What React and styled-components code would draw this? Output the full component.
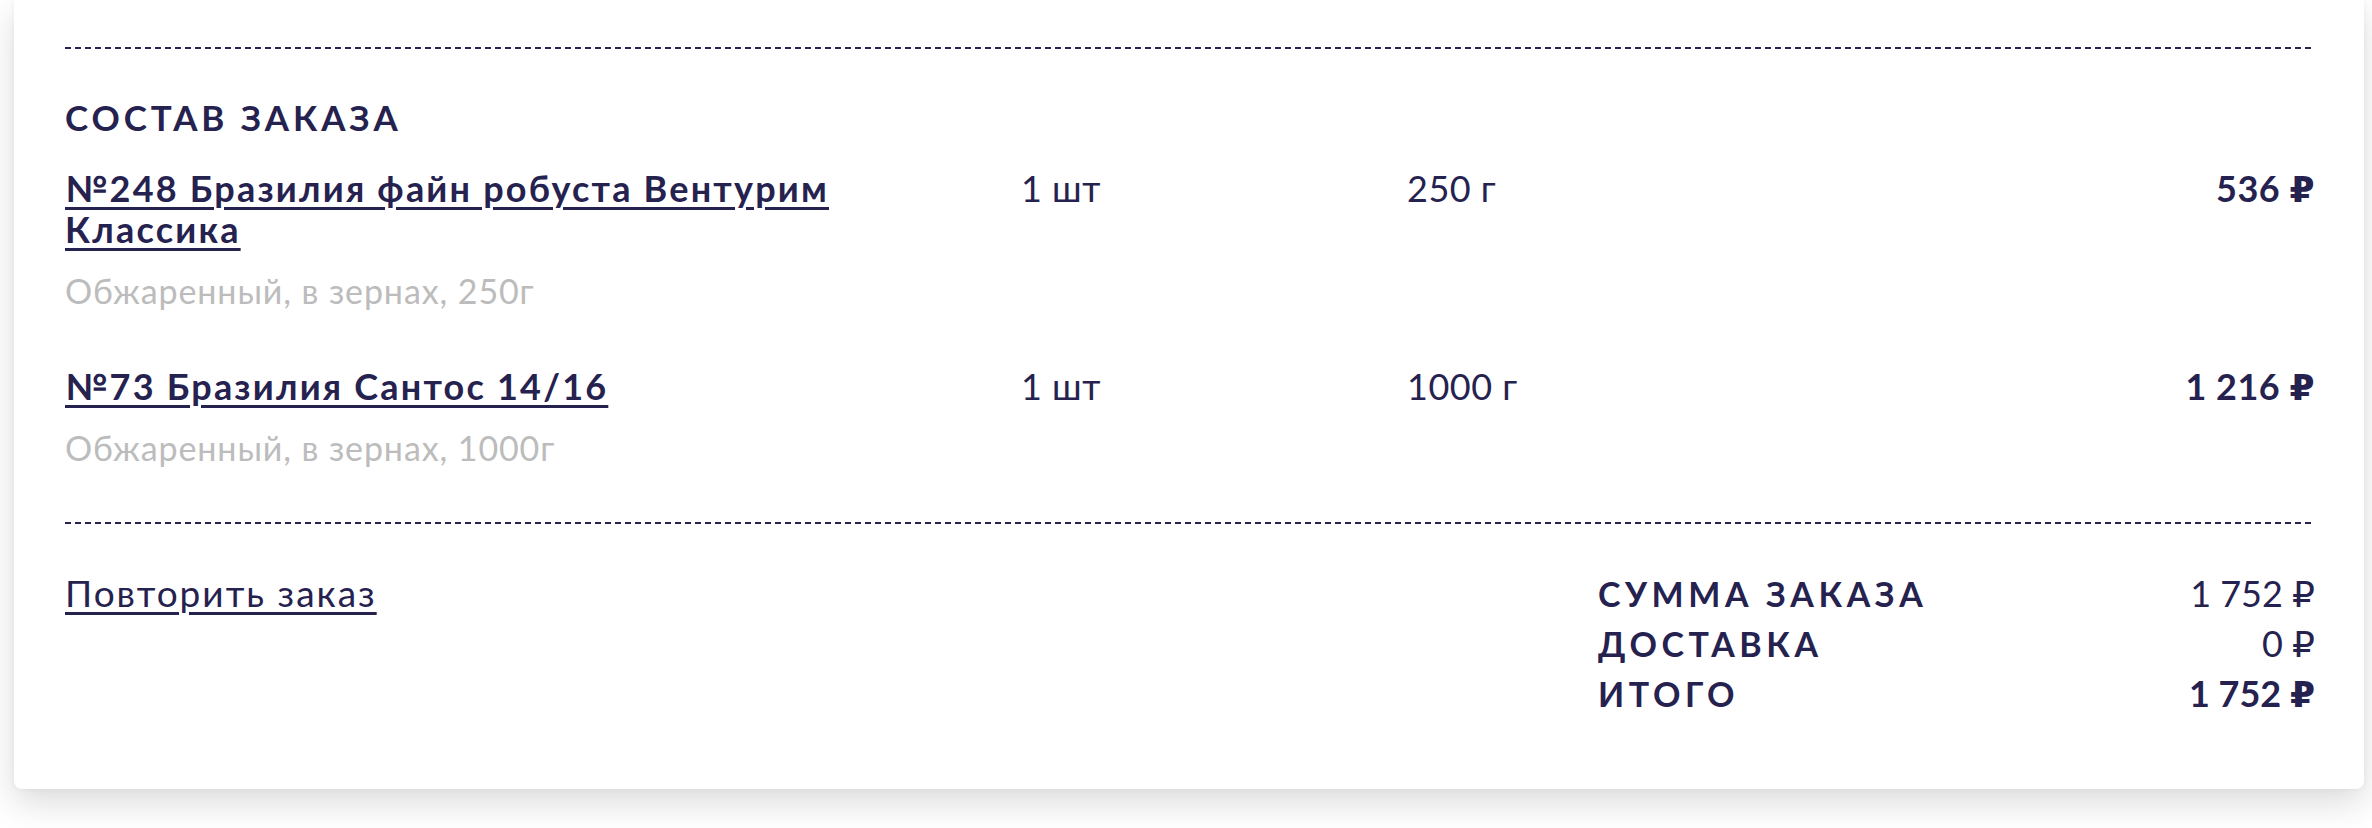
import React from "react";
import styled, { createGlobalStyle } from "styled-components";

const ink = "#26224f";

const Global = createGlobalStyle`
  html, body { margin: 0; padding: 0; background: #ffffff; }
  body { font-family: Lato, "Open Sans", "DejaVu Sans", sans-serif; color: ${ink}; }
`;

const Page = styled.div`
  padding: 0 8px 48px 14px;
`;

const Card = styled.section`
  background: #fff;
  border-radius: 0 0 8px 8px;
  box-shadow: 0 14px 34px rgba(0, 0, 0, 0.14), 0 0 6px rgba(0, 0, 0, 0.05);
  padding: 47px 49px 71px 51px;
`;

const Dashed = styled.div`
  height: 2px;
  background-image: repeating-linear-gradient(
    90deg,
    ${ink} 0 6px,
    transparent 6px 10px
  );
`;

const Heading = styled.h2`
  margin: 47px 0 0;
  font-size: 35px;
  line-height: 42px;
  font-weight: 700;
  letter-spacing: 3.9px;
  text-transform: uppercase;
`;

const Items = styled.div`
  display: flex;
  flex-direction: column;
  gap: 55px;
  margin-top: 30px;
  margin-bottom: 54px;
`;

const Item = styled.div`
  display: grid;
  grid-template-columns: 956px 386px 1fr auto;
  align-items: start;
`;

const NameCell = styled.div`
  display: flex;
  flex-direction: column;
  gap: 21px;
`;

const Title = styled.a`
  display: block;
  max-width: 880px;
  font-size: 36px;
  line-height: 41px;
  font-weight: 700;
  letter-spacing: 2.2px;
  color: ${ink};
  text-decoration: underline;
  text-decoration-thickness: 3px;
  text-underline-offset: 5px;
  cursor: pointer;
`;

const Sub = styled.div`
  font-size: 34px;
  line-height: 40px;
  letter-spacing: 0.9px;
  color: #bcbcbc;
`;

const Cell = styled.div`
  font-size: 36px;
  line-height: 41px;
  font-weight: ${(p) => (p.$bold ? 700 : 400)};
  letter-spacing: 0.5px;
  text-align: ${(p) => (p.$right ? "right" : "left")};
  white-space: nowrap;
`;

const Footer = styled.div`
  display: flex;
  justify-content: space-between;
  align-items: flex-start;
  margin-top: 44px;
`;

const Repeat = styled.a`
  font-size: 37px;
  line-height: 50px;
  letter-spacing: 2px;
  color: ${ink};
  text-decoration: underline;
  text-decoration-thickness: 3px;
  text-underline-offset: 5px;
  cursor: pointer;
`;

const Summary = styled.div`
  width: 717px;
  display: grid;
  grid-template-columns: 1fr auto;
  grid-auto-rows: 50px;
  align-items: center;
`;

const Label = styled.div`
  font-size: 34px;
  font-weight: 700;
  letter-spacing: 4.6px;
  text-transform: uppercase;
`;

const Value = styled.div`
  font-size: 36px;
  text-align: right;
  font-weight: ${(p) => (p.$bold ? 700 : 400)};
  white-space: nowrap;
`;

const items = [
  {
    title: "№248 Бразилия файн робуста Вентурим Классика",
    sub: "Обжаренный, в зернах, 250г",
    qty: "1 шт",
    weight: "250 г",
    price: "536 ₽",
  },
  {
    title: "№73 Бразилия Сантос 14/16",
    sub: "Обжаренный, в зернах, 1000г",
    qty: "1 шт",
    weight: "1000 г",
    price: "1 216 ₽",
  },
];

const totals = [
  { label: "Сумма заказа", value: "1 752 ₽" },
  { label: "Доставка", value: "0 ₽" },
  { label: "Итого", value: "1 752 ₽", bold: true },
];

export default function App() {
  return (
    <>
      <Global />
      <Page>
        <Card>
          <Dashed />
          <Heading>Состав заказа</Heading>
          <Items>
            {items.map((it) => (
              <Item key={it.title}>
                <NameCell>
                  <Title>{it.title}</Title>
                  <Sub>{it.sub}</Sub>
                </NameCell>
                <Cell>{it.qty}</Cell>
                <Cell>{it.weight}</Cell>
                <Cell $bold $right>
                  {it.price}
                </Cell>
              </Item>
            ))}
          </Items>
          <Dashed />
          <Footer>
            <Repeat>Повторить заказ</Repeat>
            <Summary>
              {totals.map((t) => (
                <React.Fragment key={t.label}>
                  <Label>{t.label}</Label>
                  <Value $bold={t.bold}>{t.value}</Value>
                </React.Fragment>
              ))}
            </Summary>
          </Footer>
        </Card>
      </Page>
    </>
  );
}
